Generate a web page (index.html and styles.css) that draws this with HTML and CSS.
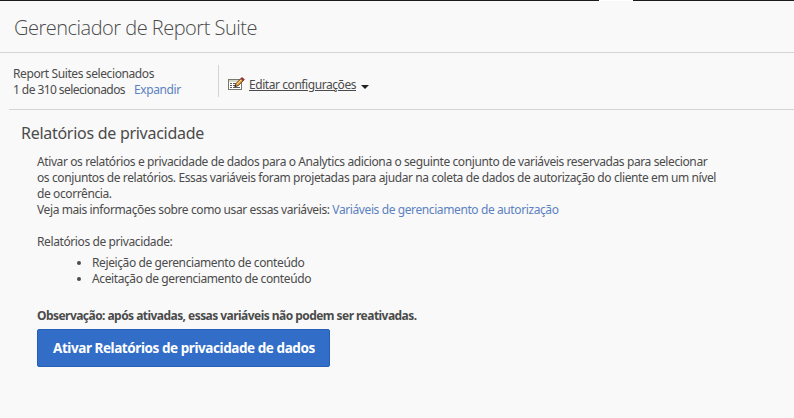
FILE: index.html
```html
<!DOCTYPE html>
<html lang="pt-BR">
<head>
<meta charset="utf-8">
<title>Gerenciador de Report Suite</title>
<link rel="stylesheet" href="styles.css">
</head>
<body>
<div class="topbar"><div class="topbar-tab"></div></div>
<header class="page-header"><h1>Gerenciador de Report Suite</h1></header>
<section class="toolbar">
  <div class="suites">
    <div>Report Suites selecionados</div>
    <div><span class="suites-count">1 de 310 selecionados</span><a class="link expand" href="#">Expandir</a></div>
  </div>
  <div class="edit">
    <svg class="edit-icon" width="17" height="14" viewBox="0 0 17 14" shape-rendering="crispEdges">
      <path d="M.5 2.5h13v10H.5z" fill="#fff" stroke="#77776f"/>
      <path d="M1 3h12v2H1z" fill="#d5d8c5"/>
      <path d="M2 6.500h2M5 6.500h3M2 8.500h2M5 8.500h3M2 10.500h2M5 10.500h7" stroke="#5c5c58"/>
      <g shape-rendering="auto">
        <path d="M7 9.500 8 6.500 13 1.500 15.200 3.700 10 8.700z" fill="#e9a23b" stroke="#693b20"/>
        <path d="m13 1.500 1.200-1 2 2-1 1.200z" fill="#b52d42" stroke="#70202d" stroke-width=".8"/>
        <path d="m9.200 6.800 4-4" stroke="#ffdf87"/>
        <path d="m6.500 10 .7-2 1.300 1.300z" fill="#222"/>
      </g>
    </svg>
    <a class="edit-link" href="#">Editar configurações</a>
    <svg class="caret" width="8" height="4" viewBox="0 0 8 4"><path d="M0 0h8L4 4z" fill="#222"/></svg>
  </div>
</section>
<main>
  <h2>Relatórios de privacidade</h2>
  <div class="content">
    <p>Ativar os relatórios e privacidade de dados para o Analytics adiciona o seguinte conjunto de variáveis reservadas para selecionar<br>
    os conjuntos de relatórios. Essas variáveis foram projetadas para ajudar na coleta de dados de autorização do cliente em um nível<br>
    de ocorrência.<br>
    Veja mais informações sobre como usar essas variáveis: <a class="link" href="#">Variáveis de gerenciamento de autorização</a></p>
    <p class="list-title">Relatórios de privacidade:</p>
    <ul>
      <li>Rejeição de gerenciamento de conteúdo</li>
      <li>Aceitação de gerenciamento de conteúdo</li>
    </ul>
    <p class="note">Observação: após ativadas, essas variáveis não podem ser reativadas.</p>
    <button class="primary">Ativar Relatórios de privacidade de dados</button>
  </div>
</main>
</body>
</html>
```
FILE: styles.css
```css
* { box-sizing: border-box; }
body { margin: 0; height: 418px; overflow: hidden; background: #f9f9f9; color: #4b4b4b; font: 12px/16px "Noto Sans", "Open Sans", sans-serif; letter-spacing: -.397px; white-space: nowrap; }
h1, h2, p, ul { margin: 0; font-weight: 400; }
.topbar { height: 1px; background: #1e1a1e; padding-left: 599px; }
.topbar-tab { width: 34px; height: 1px; background: #fff; }
.page-header { height: 52px; padding: 13px 14px 0; border-bottom: 1px solid #d4d4d4; }
h1 { font: 300 20px/28px "Open Sans", "Noto Sans", sans-serif; letter-spacing: -.5px; }
.toolbar { display: flex; height: 57px; margin-left: 9px; padding: 12px 0 0 4px; border-bottom: 1px solid #d4d4d4; }
.suites { width: 206px; height: 32px; padding-top: 1px; border-right: 1px solid #d4d4d4; }
.suites-count { letter-spacing: -.57px; }
.expand { margin-left: 9px; }
.link { color: #5c81c1; text-decoration: none; }
.edit { display: flex; align-items: flex-start; padding-left: 9px; }
.edit-icon { margin-top: 12px; }
.edit-link { margin: 12px 0 0 4px; color: #4b4b4b; letter-spacing: -.435px; }
.caret { margin: 20px 0 0 5px; }
main { padding: 11px 21px 0; }
h2 { font-size: 16px; line-height: 24px; letter-spacing: -.28px; }
.content { padding: 9px 0 0 16px; }
.list-title { margin-top: 16px; }
ul { margin-top: 5px; padding-left: 55px; }
.note { margin-top: 21px; font-weight: 700; letter-spacing: -.547px; }
.primary { display: block; width: 293px; height: 38px; margin-top: 5px; padding: 0 0 0 15px; border: 1px solid #2360b5; border-radius: 2px; background: #326ec8; color: #fff; font: 700 13.5px/36px "Noto Sans", sans-serif; letter-spacing: -.43px; text-align: left; }
```
